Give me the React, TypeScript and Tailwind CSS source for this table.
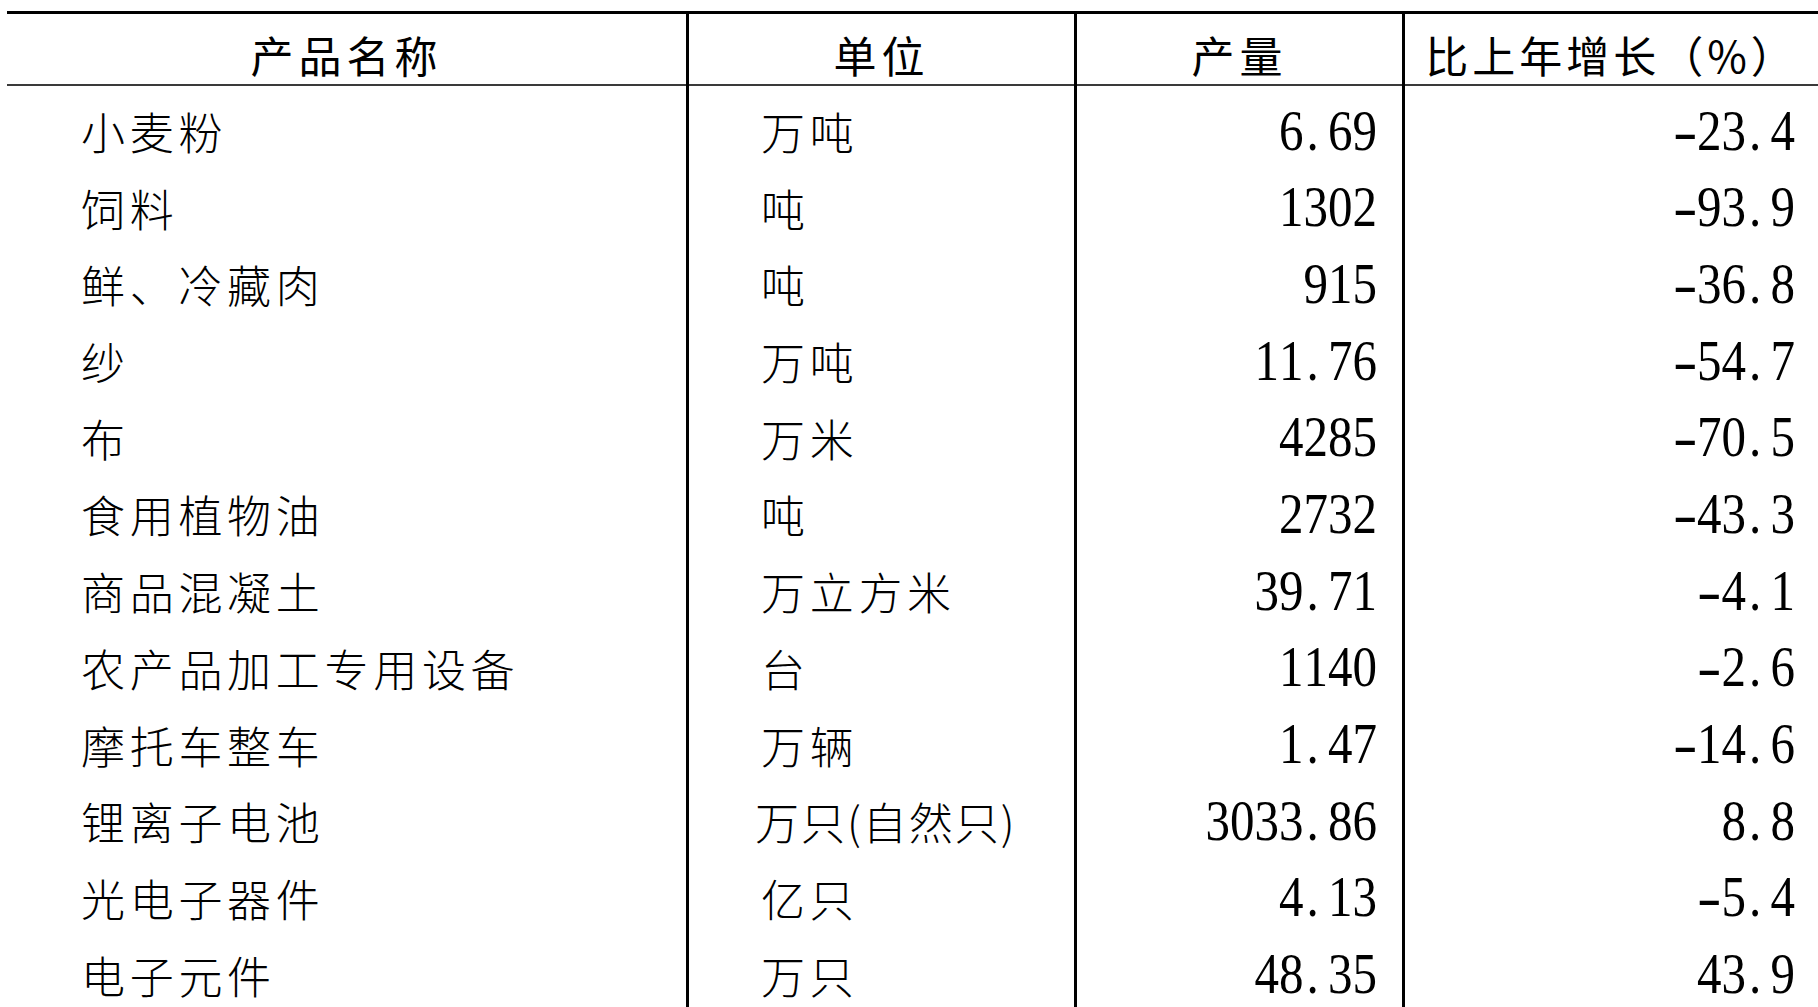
const rows: [string, string, string, string][] = [
  ['小麦粉', '万吨', '6.69', '-23.4'],
  ['饲料', '吨', '1302', '-93.9'],
  ['鲜、冷藏肉', '吨', '915', '-36.8'],
  ['纱', '万吨', '11.76', '-54.7'],
  ['布', '万米', '4285', '-70.5'],
  ['食用植物油', '吨', '2732', '-43.3'],
  ['商品混凝土', '万立方米', '39.71', '-4.1'],
  ['农产品加工专用设备', '台', '1140', '-2.6'],
  ['摩托车整车', '万辆', '1.47', '-14.6'],
  ['锂离子电池', '万只(自然只)', '3033.86', '8.8'],
  ['光电子器件', '亿只', '4.13', '-5.4'],
  ['电子元件', '万只', '48.35', '43.9'],
]

const cjk = { fontFamily: '"Noto Sans CJK SC", "Noto Sans", sans-serif' }
const num = { fontFamily: '"Liberation Serif", serif' }

// SimSun-style half-width cells: period and minus take a full digit cell
function Num({ value }: { value: string }) {
  return (
    <span className="inline-flex origin-center scale-y-[1.15] text-[49px] leading-none" style={num}>
      {value.split('').map((ch, i) =>
        ch === '.' ? (
          <span key={i} className="inline-block w-[0.5em] pl-[0.06em]">
            .
          </span>
        ) : ch === '-' ? (
          <span key={i} className="inline-block w-[0.5em] text-center">
            <span className="inline-block scale-x-[1.5]">-</span>
          </span>
        ) : (
          <span key={i}>{ch}</span>
        ),
      )}
    </span>
  )
}

export default function App() {
  return (
    <div className="h-[1007px] w-[1818px] overflow-hidden bg-white pl-[7px] pt-[11px] text-black">
      <div className="border-t-[3px] border-black">
        <div
          className="grid h-[72px] grid-cols-[679px_388px_328px_416px] border-b-2 border-[#3a3a3a] text-[43px] font-normal"
          style={cjk}
        >
          <div className="flex items-center justify-center pt-2 tracking-[5px]">产品名称</div>
          <div className="flex items-center justify-center border-l-[3px] border-black pt-2 tracking-[5px]">
            单位
          </div>
          <div className="flex items-center justify-center border-l-[3px] border-black pt-2 tracking-[5px]">
            产量
          </div>
          <div className="flex items-center justify-center border-l-[3px] border-black pt-2 tracking-[4px]">
            比上年增长（%）
          </div>
        </div>

        {rows.map(([name, unit, output, growth]) => (
          <div key={name} className="grid h-[76.7px] grid-cols-[679px_388px_328px_416px]">
            <div
              className="flex items-center pl-[74px] pt-3 text-[44px] font-light tracking-[4.7px]"
              style={cjk}
            >
              {name}
            </div>
            <div
              className={`flex items-center border-l-[3px] border-black pt-3 text-[44px] font-light ${
                unit.includes('(') ? 'pl-[66px] tracking-[2px]' : 'pl-[72px] tracking-[4.7px]'
              }`}
              style={cjk}
            >
              {unit}
            </div>
            <div className="flex items-center justify-end border-l-[3px] border-black pr-[25px] pt-3">
              <Num value={output} />
            </div>
            <div className="flex items-center justify-end border-l-[3px] border-black pr-[23px] pt-3">
              <Num value={growth} />
            </div>
          </div>
        ))}
      </div>
    </div>
  )
}
